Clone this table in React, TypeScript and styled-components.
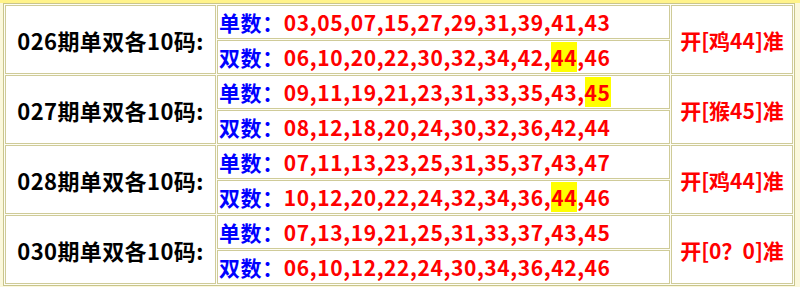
import styled, { createGlobalStyle } from "styled-components";

type Row = {
  issue: string;
  odd: string[];
  even: string[];
  result: string;
  hit?: string;
};

const rows: Row[] = [
  {
    issue: "026",
    odd: ["03", "05", "07", "15", "27", "29", "31", "39", "41", "43"],
    even: ["06", "10", "20", "22", "30", "32", "34", "42", "44", "46"],
    result: "开[鸡44]准",
    hit: "44",
  },
  {
    issue: "027",
    odd: ["09", "11", "19", "21", "23", "31", "33", "35", "43", "45"],
    even: ["08", "12", "18", "20", "24", "30", "32", "36", "42", "44"],
    result: "开[猴45]准",
    hit: "45",
  },
  {
    issue: "028",
    odd: ["07", "11", "13", "23", "25", "31", "35", "37", "43", "47"],
    even: ["10", "12", "20", "22", "24", "32", "34", "36", "44", "46"],
    result: "开[鸡44]准",
    hit: "44",
  },
  {
    issue: "030",
    odd: ["07", "13", "19", "21", "25", "31", "33", "37", "43", "45"],
    even: ["06", "10", "12", "22", "24", "30", "34", "36", "42", "46"],
    result: "开[0？0]准",
  },
];

const GlobalStyle = createGlobalStyle`
  html, body {
    margin: 0;
    padding: 0;
    background: #fbf8dc;
  }
  body {
    font-family: "Noto Sans CJK SC", "Noto Sans", sans-serif;
  }
`;

const Page = styled.div`
  width: 800px;
  height: 287px;
  box-sizing: border-box;
  padding: 3px 5px 0 3px;
  background: linear-gradient(#fff38a 0 3px, #fbf8dc 3px);
`;

const Table = styled.table`
  width: 792px;
  border: 1px solid #c9c58c;
  border-spacing: 1px;
  background: #fdfdf6;
  table-layout: fixed;
`;

const Cell = styled.td`
  border: 1px solid #cfcb98;
  background: #ffffff;
  padding: 0;
  height: 32px;
  font-size: 21px;
  font-weight: 700;
  line-height: 32px;
  white-space: nowrap;
  overflow: hidden;
`;

const IssueCell = styled(Cell)`
  text-align: center;
  color: #000000;
  font-size: 22px;
  letter-spacing: 0.4px;
`;

const NumCell = styled(Cell)`
  padding-left: 1px;
  color: #ff0000;
  letter-spacing: 0.6px;
`;

const ResultCell = styled(Cell)`
  text-align: center;
  color: #ff0000;
`;

const Label = styled.span`
  color: #0000ff;
`;

const Hit = styled.span`
  background: #ffff00;
`;

const Numbers = ({ label, list, hit }: { label: string; list: string[]; hit?: string }) => (
  <>
    <Label>{label}：</Label>
    {list.map((n, i) => (
      <span key={i}>
        {n === hit ? <Hit>{n}</Hit> : n}
        {i < list.length - 1 ? "," : ""}
      </span>
    ))}
  </>
);

const App = () => (
  <Page>
    <GlobalStyle />
    <Table>
      <colgroup>
        <col style={{ width: 211 }} />
        <col style={{ width: 453 }} />
        <col />
      </colgroup>
      <tbody>
        {rows.map((r) => [
          <tr key={r.issue + "a"}>
            <IssueCell rowSpan={2}>{r.issue}期单双各10码:</IssueCell>
            <NumCell>
              <Numbers label="单数" list={r.odd} hit={r.hit} />
            </NumCell>
            <ResultCell rowSpan={2}>{r.result}</ResultCell>
          </tr>,
          <tr key={r.issue + "b"}>
            <NumCell>
              <Numbers label="双数" list={r.even} hit={r.hit} />
            </NumCell>
          </tr>,
        ])}
      </tbody>
    </Table>
  </Page>
);

export default App;
